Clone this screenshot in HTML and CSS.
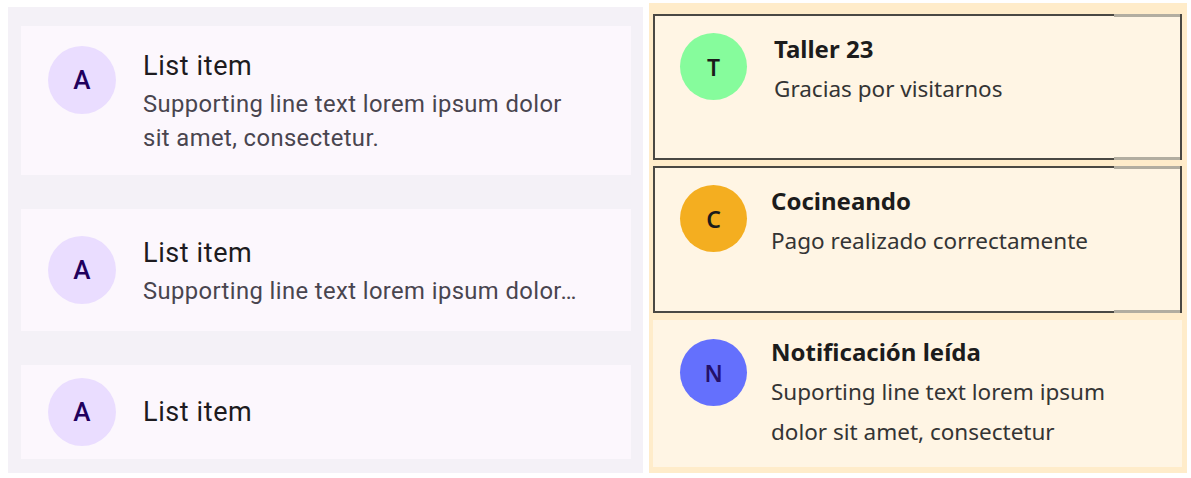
FILE: index.html
```html
<!DOCTYPE html>
<html lang="es">
<head>
<meta charset="utf-8">
<title>Listas</title>
<link rel="stylesheet" href="styles.css">
</head>
<body>
<div class="page">
  <section class="m3-panel">
    <div class="m3-item three-line">
      <div class="m3-avatar">A</div>
      <div class="m3-text">
        <div class="m3-headline">List item</div>
        <div class="m3-support">Supporting line text lorem ipsum dolor sit amet, consectetur.</div>
      </div>
    </div>
    <div class="m3-item two-line">
      <div class="m3-avatar">A</div>
      <div class="m3-text">
        <div class="m3-headline">List item</div>
        <div class="m3-support single">Supporting line text lorem ipsum dolor…</div>
      </div>
    </div>
    <div class="m3-item one-line">
      <div class="m3-avatar">A</div>
      <div class="m3-text">
        <div class="m3-headline">List item</div>
      </div>
    </div>
  </section>

  <section class="notif-panel">
    <div class="notif bordered first">
      <div class="notif-avatar green">T</div>
      <div class="notif-text shifted">
        <div class="notif-title">Taller 23</div>
        <div class="notif-sub">Gracias por visitarnos</div>
      </div>
    </div>
    <div class="notif bordered second">
      <div class="notif-avatar orange">C</div>
      <div class="notif-text">
        <div class="notif-title">Cocineando</div>
        <div class="notif-sub">Pago realizado correctamente</div>
      </div>
    </div>
    <div class="notif read">
      <div class="notif-avatar blue">N</div>
      <div class="notif-text">
        <div class="notif-title">Notificación leída</div>
        <div class="notif-sub">Suporting line text lorem ipsum dolor sit amet, consectetur</div>
      </div>
    </div>
  </section>
</div>
</body>
</html>
```

FILE: styles.css
```css
* { box-sizing: border-box; }

html, body {
  margin: 0;
  padding: 0;
  background: #ffffff;
}

.page {
  display: flex;
  align-items: flex-start;
}

/* ---------- Left: Material 3 list ---------- */
.m3-panel {
  width: 635px;
  height: 466px;
  margin: 7px 0 0 8px;
  padding: 19px 12px 0 13px;
  background: #f4f1f7;
  display: flex;
  flex-direction: column;
  gap: 34px;
  font-family: Roboto, "Liberation Sans", sans-serif;
}

.m3-item {
  background: #fcf7fd;
  display: flex;
  align-items: center;
  gap: 27px;
  padding: 0 41px 0 27px;
}

.m3-item.three-line {
  height: 149px;
  align-items: flex-start;
  padding-top: 20px;
}
.m3-item.two-line { height: 122px; }
.m3-item.one-line { height: 94px; }

.m3-avatar {
  flex: 0 0 68px;
  width: 68px;
  height: 68px;
  border-radius: 50%;
  background: #eaddff;
  color: #21005d;
  font-size: 26px;
  font-weight: 500;
  display: flex;
  align-items: center;
  justify-content: center;
  letter-spacing: 0.25px;
}

.m3-text {
  flex: 1;
  min-width: 0;
}

.m3-headline {
  font-size: 27px;
  line-height: 41px;
  color: #1d1b20;
  letter-spacing: 0.6px;
}

.m3-support {
  font-size: 23.8px;
  line-height: 34px;
  color: #49454f;
  letter-spacing: 0.4px;
}

.m3-support.single {
  white-space: nowrap;
}

/* ---------- Right: notifications ---------- */
.notif-panel {
  width: 538px;
  height: 470px;
  margin: 3px 0 0 6px;
  padding: 11px 5px 0 4px;
  background: #ffecca;
  display: flex;
  flex-direction: column;
  font-family: "Noto Sans", Lato, sans-serif;
}

.notif {
  position: relative;
  height: 147px;
  background: #fff5e4;
  display: flex;
  align-items: flex-start;
  gap: 24px;
  padding: 12px 25px 0 25px;
  border: 2px solid #4a4843;
}

.notif.first { height: 146px; }
.notif.second { margin-top: 6px; }
.notif.read {
  margin-top: 7px;
  border-color: transparent;
  padding-top: 9px;
}

.notif.bordered::before,
.notif.bordered::after {
  content: "";
  position: absolute;
  left: 459px;
  right: 0;
  height: 3px;
  background: #b2ada0;
  filter: blur(0.6px);
}
.notif.bordered::before { top: -2px; }
.notif.bordered::after { bottom: -2px; }

.notif-avatar {
  flex: 0 0 67px;
  width: 67px;
  height: 67px;
  margin-top: 5px;
  border-radius: 50%;
  display: flex;
  align-items: center;
  justify-content: center;
  font-size: 23px;
  font-weight: 600;
  color: #1b1b1b;
}
.notif.read .notif-avatar { margin-top: 8px; }
.notif-avatar.green { background: #86fc9c; }
.notif-avatar.orange { background: #f4ae20; }
.notif-avatar.blue { background: #6470fd; color: #24106a; }

.notif-text {
  flex: 1;
  min-width: 0;
}
.notif-text.shifted { padding-left: 3px; }

.notif-title {
  font-size: 24px;
  font-weight: 700;
  line-height: 41px;
  color: #1c1c1c;
}

.notif-sub {
  font-size: 22.5px;
  line-height: 40px;
  color: #343434;
  max-width: 370px;
}
```
